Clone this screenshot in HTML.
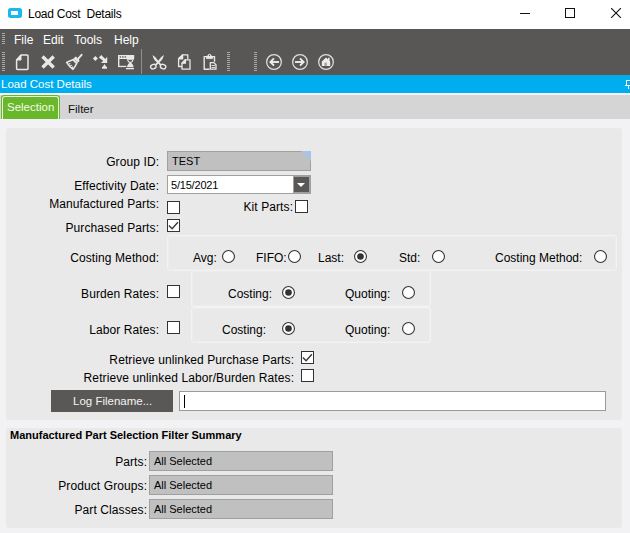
<!DOCTYPE html>
<html><head><meta charset="utf-8">
<style>
*{margin:0;padding:0;box-sizing:border-box}
html,body{width:630px;height:533px;overflow:hidden;background:#f2f2f4;font-family:"Liberation Sans",sans-serif;font-size:12px;color:#000}
.a{position:absolute}
.t{position:absolute;white-space:pre;line-height:1}
#title{left:0;top:0;width:630px;height:29px;background:#fff}
#dark{left:0;top:29px;width:630px;height:46px;background:#595755}
#blue{left:0;top:75px;width:630px;height:18px;background:#00adef}
#wline{left:0;top:93px;width:630px;height:2px;background:#f6f3f4}
#tabbar{left:0;top:95px;width:630px;height:24px;background:#d5d5d5}
.panel{position:absolute;background:#e9e9e9;border-radius:3px}
.grp{position:absolute;background:#e9e9e9;border:1px solid #f3f3f3;box-shadow:inset 0 0 0 1px #ececec;border-radius:3px}
.cb{position:absolute;width:13px;height:13px;border:1px solid #333;background:#fff}
.rd{position:absolute;width:13px;height:13px;border:1px solid #333;border-radius:50%;background:#fff}
.rd.on::after{content:"";position:absolute;left:2px;top:2px;width:7px;height:7px;border-radius:50%;background:#333}
.fld{position:absolute;background:#c0c0c0;border:1px solid #a0a0a0}
.lbl{position:absolute;white-space:pre;line-height:1;text-align:right;letter-spacing:0.1px;margin-right:-0.1px}
</style></head><body>
<div id="title" class="a"></div>
<div class="a" style="left:8px;top:8px;width:14px;height:10px;border:3px solid #1ab9ec;border-right-width:4px;border-radius:2.5px;background:#fff"></div>
<div class="t" style="left:28px;top:8px;font-size:12px;letter-spacing:-0.26px;color:#000">Load Cost  Details</div>
<!-- window controls -->
<div class="a" style="left:520px;top:13px;width:10px;height:1px;background:#111"></div>
<div class="a" style="left:565px;top:8px;width:10px;height:10px;border:1px solid #111"></div>
<svg class="a" style="left:611px;top:8px" width="10" height="10" viewBox="0 0 10 10"><path d="M0 0L10 10M10 0L0 10" stroke="#111" stroke-width="1.1"/></svg>

<div id="dark" class="a"></div>
<div id="blue" class="a"></div>
<div id="wline" class="a"></div>
<div id="tabbar" class="a"></div>


<svg class="a" style="left:0;top:0" width="630" height="80" viewBox="0 0 630 80">
<g fill="#a8a7a5"><rect x="2" y="33" width="3" height="1"/><rect x="2" y="35" width="3" height="1"/><rect x="2" y="37" width="3" height="1"/><rect x="2" y="39" width="3" height="1"/><rect x="2" y="41" width="3" height="1"/><rect x="2" y="43" width="3" height="1"/><rect x="2" y="52" width="3" height="1"/><rect x="2" y="54" width="3" height="1"/><rect x="2" y="56" width="3" height="1"/><rect x="2" y="58" width="3" height="1"/><rect x="2" y="60" width="3" height="1"/><rect x="2" y="62" width="3" height="1"/><rect x="2" y="64" width="3" height="1"/><rect x="2" y="66" width="3" height="1"/><rect x="2" y="68" width="3" height="1"/><rect x="2" y="70" width="3" height="1"/><rect x="227" y="52" width="3" height="1"/><rect x="227" y="54" width="3" height="1"/><rect x="227" y="56" width="3" height="1"/><rect x="227" y="58" width="3" height="1"/><rect x="227" y="60" width="3" height="1"/><rect x="227" y="62" width="3" height="1"/><rect x="227" y="64" width="3" height="1"/><rect x="227" y="66" width="3" height="1"/><rect x="227" y="68" width="3" height="1"/><rect x="227" y="70" width="3" height="1"/><rect x="254" y="52" width="3" height="1"/><rect x="254" y="54" width="3" height="1"/><rect x="254" y="56" width="3" height="1"/><rect x="254" y="58" width="3" height="1"/><rect x="254" y="60" width="3" height="1"/><rect x="254" y="62" width="3" height="1"/><rect x="254" y="64" width="3" height="1"/><rect x="254" y="66" width="3" height="1"/><rect x="254" y="68" width="3" height="1"/><rect x="254" y="70" width="3" height="1"/></g>
<rect x="141" y="49" width="1" height="25" fill="#8f8e8c"/>
<g fill="none" stroke="#e8e8e8" stroke-width="1.5" stroke-linejoin="round">
<!-- new doc -->
<path d="M16.6 60L21 55H27.2Q28 55 28 55.8V68.6Q28 69.4 27.2 69.4H17.4Q16.6 69.4 16.6 68.6Z"/>
</g>
<path d="M16.6 60L21 55V60Z" fill="#e8e8e8" stroke="#e8e8e8" stroke-width="1" stroke-linejoin="round"/>
<!-- X -->
<path d="M42.5 56.5L53.7 67.5M53.7 56.5L42.5 67.5" stroke="#e8e8e8" stroke-width="3.4" stroke-linecap="butt"/>
<!-- broom -->
<g transform="translate(62,50)" fill="none" stroke="#e8e8e8">
<path d="M15.2 9.8L19.6 4.8" stroke-width="1.9" stroke-linecap="round"/>
<path d="M11 9.6L13.8 7.2L17 10.6L14.6 13.4Z" fill="#e8e8e8" stroke-width="1.1" stroke-linejoin="round"/>
<path d="M11.6 10.4L15.6 13.8M12.4 9.6L16.2 12.8" stroke="#8a8886" stroke-width="0.5"/>
<path d="M4.6 12.4Q7.8 10.8 11 9.8L14.6 13.6Q13 16.8 11 19.4Q7 16.5 4.6 12.4Z" stroke-width="1.5" stroke-linejoin="round"/>
<path d="M6.3 14.2L8.3 13.6M7.6 16.2L9.8 15.2M9.3 18L11.2 16.8" stroke-width="1.1"/>
</g>
<!-- arrow icon -->
<g transform="translate(88,50)" fill="#e8e8e8">
<path d="M4.9 8.5L7.4 6L9.9 8.5L7.4 11Z"/>
<path d="M10.8 7.6L13.3 5.1L17.2 9L19.2 6.8V13H13L15.2 10.8Z"/>
<path d="M16.5 14L18.2 16.8H19V18.8H14V16.8H14.8Z"/>
</g>
<!-- hourglass window -->
<g transform="translate(114,50)">
<rect x="4" y="5" width="1.4" height="12" fill="#e8e8e8"/>
<rect x="4" y="15.8" width="9" height="1.3" fill="#e8e8e8"/>
<rect x="4" y="5" width="16.2" height="4" fill="#e8e8e8"/>
<rect x="5.6" y="6.2" width="1.5" height="1.5" fill="#6a6866"/><rect x="8.1" y="6.2" width="1.5" height="1.5" fill="#6a6866"/><rect x="10.6" y="6.2" width="1.5" height="1.5" fill="#6a6866"/>
<rect x="12.4" y="9" width="8" height="9" fill="#595755"/>
<rect x="12.8" y="8.6" width="7" height="1.2" fill="#e8e8e8"/>
<path d="M13.6 9.8Q13.8 11.8 16.3 12.6Q18.8 11.8 19 9.8" fill="none" stroke="#e8e8e8" stroke-width="1.2"/>
<path d="M16.3 12.4Q13.2 13.8 13 17.2H19.6Q19.4 13.8 16.3 12.4Z" fill="#e8e8e8"/>
<rect x="12" y="18" width="8" height="1.3" fill="#e8e8e8"/>
</g>
<!-- scissors -->
<g transform="translate(146,50)" fill="#e8e8e8">
<path d="M6.6 5Q10 6.8 12.8 11.4L15.4 14.6L14 15.5L11.2 12.6Q7.2 9.6 6.6 5Z"/>
<path d="M17.8 5Q14.4 6.8 11.6 11.4L9 14.6L10.4 15.5L13.2 12.6Q17.2 9.6 17.8 5Z"/>
<g fill="none" stroke="#e8e8e8" stroke-width="1.35">
<ellipse cx="7.3" cy="16.6" rx="2.8" ry="2.2" transform="rotate(-20 7.3 16.6)"/>
<ellipse cx="17.1" cy="16.6" rx="2.8" ry="2.2" transform="rotate(20 17.1 16.6)"/>
</g>
</g>
<!-- copy -->
<g transform="translate(172,50)" fill="none" stroke="#e8e8e8" stroke-width="1.3" stroke-linejoin="round">
<path d="M10 16.5H6.6V8.8L10.6 4.9H15.8V9"/>
<path d="M6.6 8.8L10.6 4.9V8.8Z" fill="#e8e8e8"/>
<path d="M10 13.2L13.4 9.8H18V19.2H10Z"/>
<path d="M10 13.2L13.4 9.8V13.2Z" fill="#e8e8e8"/>
</g>
<!-- paste -->
<g transform="translate(198,50)" fill="none" stroke="#e8e8e8" stroke-linejoin="round">
<path d="M11.5 19.2H6.2V6.6H16.5V11.8" stroke-width="1.4"/>
<path d="M8.5 7V8.6H14.5V7H13.5Q13.5 4.3 11.5 4.3Q9.5 4.3 9.5 7Z" fill="#e8e8e8" stroke-width="0.8"/>
<circle cx="11.5" cy="5.4" r="0.6" fill="#595755" stroke="none"/>
<path d="M12.3 19.2V12.6H15.8L18 14.8V19.2Z" stroke-width="1.3"/>
<path d="M13.5 15.5H17M13.5 17.5H17" stroke-width="0.9"/>
</g>
<!-- nav circles -->
<g fill="none" stroke="#e0e0e0" stroke-width="1.25">
<circle cx="274" cy="62" r="7.35"/>
<circle cx="300" cy="62" r="7.35"/>
<circle cx="326" cy="62" r="7.35"/>
</g>
<g stroke="#ececec" fill="none" stroke-width="1.9" stroke-linejoin="miter">
<path d="M270.5 62H279"/><path d="M274 58.4L270.4 62L274 65.6"/>
<path d="M295 62H303.5"/><path d="M300 58.4L303.6 62L300 65.6"/>
</g>
<g transform="translate(316,52.4)" fill="#ececec">
<path d="M5.8 9L10 5L12 6.9V5.4H13.6V8.4L14.2 9V13.5H5.8Z"/>
<rect x="8.4" y="10.2" width="2.6" height="3.3" fill="#a8a8a8"/>
</g>
</svg>

<!-- menu -->
<div class="t" style="left:14px;top:34px;color:#fff;font-size:12px">File</div>
<div class="t" style="left:43px;top:34px;color:#fff;font-size:12px">Edit</div>
<div class="t" style="left:74px;top:34px;color:#fff;font-size:12px">Tools</div>
<div class="t" style="left:114px;top:34px;color:#fff;font-size:12px">Help</div>

<!-- blue bar text -->
<div class="t" style="left:1px;top:79px;color:#fff;font-size:11.5px">Load Cost Details</div>

<div class="a" style="left:626px;top:80px;width:6px;height:6px;border-left:1px solid #fff;border-top:1px solid #fff"></div>
<div class="a" style="left:625px;top:85px;width:5px;height:1px;background:#fff"></div>
<div class="a" style="left:628px;top:86px;width:1px;height:3px;background:#fff"></div>
<!-- tabs -->
<div class="a" style="left:1px;top:95px;width:59px;height:24px;background:#69b82c;border-radius:3px 3px 0 0"></div>
<div class="a" style="left:2px;top:96px;width:57px;height:23px;border:1px solid #e8f4d8;border-bottom:none;border-radius:3px 3px 0 0"></div>
<div class="t" style="left:7px;top:102px;color:#f6fae8;font-size:11.5px">Selection</div>
<div class="t" style="left:68px;top:104px;color:#111;font-size:11.5px">Filter</div>

<!-- panel 1 -->
<div class="panel" style="left:6px;top:128px;width:616px;height:292px"></div>
<!-- panel 2 -->
<div class="panel" style="left:6px;top:428px;width:616px;height:100px"></div>


<!-- form panel 1 -->
<div class="lbl" style="right:471px;top:156px">Group ID:</div>
<div class="fld" style="left:167px;top:151px;width:144px;height:20px;border-color:#a0a0a0"></div>
<div class="a" style="left:301px;top:151px;width:0;height:0;border-top:10px solid #a9c3e6;border-left:10px solid transparent"></div>
<div class="t" style="left:172px;top:156px;font-size:11px">TEST</div>

<div class="lbl" style="right:471px;top:180px">Effectivity Date:</div>
<div class="a" style="left:167px;top:175px;width:144px;height:19px;background:#fff;border:1px solid #a0a0a0"></div>
<div class="a" style="left:293px;top:175px;width:18px;height:19px;background:#a0a0a0"></div>
<div class="a" style="left:294px;top:177px;width:15px;height:15px;background:#5a5856"></div>
<div class="a" style="left:297px;top:183px;width:0;height:0;border-top:4.5px solid #fff;border-left:4px solid transparent;border-right:4px solid transparent"></div>
<div class="t" style="left:171px;top:180px;font-size:11px;letter-spacing:-0.2px">5/15/2021</div>

<div class="lbl" style="right:471px;top:198px">Manufactured Parts:</div>
<div class="cb" style="left:167px;top:201px"></div>
<div class="lbl" style="right:337px;top:201px">Kit Parts:</div>
<div class="cb" style="left:295px;top:200px"></div>

<div class="lbl" style="right:471px;top:222px">Purchased Parts:</div>
<div class="cb" style="left:167px;top:219px"><svg width="11" height="11" style="position:absolute;left:0;top:0"><path d="M0.9 5.4L4.1 8.7L9.9 2.2" fill="none" stroke="#3a3a3a" stroke-width="1.4"/></svg></div>

<div class="grp" style="left:167px;top:235px;width:450px;height:36px"></div>
<div class="lbl" style="right:471px;top:252px">Costing Method:</div>
<div class="t" style="left:193px;top:252px">Avg:</div>
<svg class="a" style="left:222px;top:250px" width="13" height="13"><circle cx="6.5" cy="6.5" r="5.95" fill="#fff" stroke="#333" stroke-width="1.1"/></svg>
<div class="t" style="left:256px;top:252px">FIFO:</div>
<svg class="a" style="left:288px;top:250px" width="13" height="13"><circle cx="6.5" cy="6.5" r="5.95" fill="#fff" stroke="#333" stroke-width="1.1"/></svg>
<div class="t" style="left:318px;top:252px">Last:</div>
<svg class="a" style="left:354px;top:250px" width="13" height="13"><circle cx="6.5" cy="6.5" r="5.95" fill="#fff" stroke="#333" stroke-width="1.1"/><circle cx="6.5" cy="6.5" r="3.3" fill="#333"/></svg>
<div class="t" style="left:399px;top:252px">Std:</div>
<svg class="a" style="left:432px;top:250px" width="13" height="13"><circle cx="6.5" cy="6.5" r="5.95" fill="#fff" stroke="#333" stroke-width="1.1"/></svg>
<div class="t" style="left:495px;top:252px">Costing Method:</div>
<svg class="a" style="left:594px;top:250px" width="13" height="13"><circle cx="6.5" cy="6.5" r="5.95" fill="#fff" stroke="#333" stroke-width="1.1"/></svg>

<div class="grp" style="left:191px;top:270px;width:240px;height:37px"></div>
<div class="lbl" style="right:471px;top:288px">Burden Rates:</div>
<div class="cb" style="left:167px;top:285px"></div>
<div class="t" style="left:228px;top:288px">Costing:</div>
<svg class="a" style="left:282px;top:286px" width="13" height="13"><circle cx="6.5" cy="6.5" r="5.95" fill="#fff" stroke="#333" stroke-width="1.1"/><circle cx="6.5" cy="6.5" r="3.3" fill="#333"/></svg>
<div class="t" style="left:345px;top:288px">Quoting:</div>
<svg class="a" style="left:402px;top:286px" width="13" height="13"><circle cx="6.5" cy="6.5" r="5.95" fill="#fff" stroke="#333" stroke-width="1.1"/></svg>

<div class="grp" style="left:191px;top:307px;width:240px;height:36px"></div>
<div class="lbl" style="right:471px;top:324px">Labor Rates:</div>
<div class="cb" style="left:167px;top:321px"></div>
<div class="t" style="left:222px;top:324px">Costing:</div>
<svg class="a" style="left:282px;top:322px" width="13" height="13"><circle cx="6.5" cy="6.5" r="5.95" fill="#fff" stroke="#333" stroke-width="1.1"/><circle cx="6.5" cy="6.5" r="3.3" fill="#333"/></svg>
<div class="t" style="left:345px;top:324px">Quoting:</div>
<svg class="a" style="left:402px;top:322px" width="13" height="13"><circle cx="6.5" cy="6.5" r="5.95" fill="#fff" stroke="#333" stroke-width="1.1"/></svg>

<div class="lbl" style="right:336px;top:354px">Retrieve unlinked Purchase Parts:</div>
<div class="cb" style="left:301px;top:351px"><svg width="11" height="11" style="position:absolute;left:0;top:0"><path d="M0.9 5.4L4.1 8.7L9.9 2.2" fill="none" stroke="#3a3a3a" stroke-width="1.4"/></svg></div>
<div class="lbl" style="right:336px;top:372px">Retrieve unlinked Labor/Burden Rates:</div>
<div class="cb" style="left:301px;top:369px"></div>

<div class="a" style="left:51px;top:390px;width:122px;height:22px;background:#5a5856"></div>
<div class="t" style="left:73px;top:396px;font-size:11.5px;color:#f4f4f4">Log Filename...</div>
<div class="a" style="left:179px;top:391px;width:427px;height:20px;background:#fff;border:1px solid #9a9a9a"></div>
<div class="a" style="left:184px;top:395px;width:1px;height:13px;background:#000"></div>

<!-- panel 2 -->
<div class="t" style="left:10px;top:430px;font-size:11px;font-weight:bold">Manufactured Part Selection Filter Summary</div>
<div class="lbl" style="right:483px;top:456px">Parts:</div>
<div class="fld" style="left:149px;top:451px;width:184px;height:20px"></div>
<div class="t" style="left:154px;top:456px;font-size:11px">All Selected</div>
<div class="lbl" style="right:483px;top:480px">Product Groups:</div>
<div class="fld" style="left:149px;top:475px;width:184px;height:20px"></div>
<div class="t" style="left:154px;top:480px;font-size:11px">All Selected</div>
<div class="lbl" style="right:483px;top:504px">Part Classes:</div>
<div class="fld" style="left:149px;top:499px;width:184px;height:20px"></div>
<div class="t" style="left:154px;top:504px;font-size:11px">All Selected</div>
</body></html>
